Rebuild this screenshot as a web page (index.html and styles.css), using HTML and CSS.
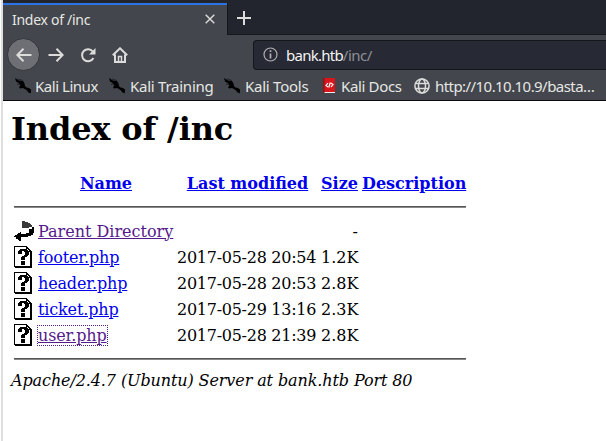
FILE: index.html
```
<!DOCTYPE html>
<html lang="en">
<head>
<meta charset="utf-8">
<title>Index of /inc</title>
<link rel="stylesheet" href="styles.css">
</head>
<body>
<svg class="defs" width="0" height="0">
  <symbol id="dragon" viewBox="0 0 16 16"><path d="M0 0l4 2.500 4 .5 1.500 2.500.5 2.500 1.500 1.500 2.500.5 2.500 2-.8 3.200-2.200-.7-2-2.500-3.500-2-3 .5-1-1.500 1.500-1.500L3.500 5 1 3.500z" fill="#000"/><path d="M3 1l5 1.500M2 6.500L5 6" stroke="#15171b" stroke-width=".7"/></symbol>
  <symbol id="unknown" viewBox="0 0 20 22" shape-rendering="crispEdges"><path d="M.5 .5h12l4 4v16h-16z" fill="#fff" stroke="#000"/><path d="M17 5h1v17H1v-1h16z" fill="#000"/><path d="M12 1h1v1h1v1h1v1h1v1h1v1h-5z" fill="#000"/><path d="M13 3h1v1h1v1h-2z" fill="#fff"/><path d="M4 8V5h1V4h1V3h6v1h2v1h1v4h-1v1h-1v1h-2v3H7v-3h1v-1h2V9h1V6h-1V5H8v3zM7 15h4v4H7z" fill="#000"/></symbol>
</svg>
<div class="window">
  <header class="chrome">
    <div class="tabs">
      <div class="tab"><span>Index of /inc</span>
        <svg width="10" height="10" viewBox="0 0 10 10"><path d="M.7 .7l8.600 8.600M9.300 .7L.7 9.300" stroke="#d8d8d6" stroke-width="1.500"/></svg>
      </div>
      <div class="newtab"><svg width="14" height="14" viewBox="0 0 14 14"><path d="M7 0v14M0 7h14" stroke="#dcdcda" stroke-width="2"/></svg></div>
    </div>
    <div class="nav">
      <div class="back"><svg width="16" height="16" viewBox="0 0 16 16"><path d="M15.500 8H1.500M7.500 1.800L1.300 8l6.200 6.200" class="line"/></svg></div>
      <svg class="forward" width="16" height="16" viewBox="0 0 16 16"><path d="M.5 8h14M8.500 1.800L14.700 8l-6.200 6.200" class="line"/></svg>
      <svg class="reload" width="16" height="16" viewBox="0 0 16 16"><path d="M12.800 4.500A6 6 0 1 0 13.400 11" class="line"/><path d="M15.500 1v6.500H9z" fill="#dcdcda"/></svg>
      <svg class="home" width="16" height="16" viewBox="0 0 16 16"><path d="M.8 8.200L8 1.300l7.200 6.900M3 7.500V15h10V7.500" class="line"/><path d="M6.500 15V9.500h3V15" fill="none" stroke="#dcdcda" stroke-width="1.500"/></svg>
      <div class="url"><svg width="15" height="15" viewBox="0 0 15 15"><circle cx="7.500" cy="7.500" r="6.500" fill="none" stroke="#b0b0b3" stroke-width="1.200"/><path d="M7.500 6.500v5M7.500 3.300v1.800" stroke="#b0b0b3" stroke-width="1.700"/></svg><span class="address">bank.htb<span class="path">/inc/</span></span></div>
    </div>
    <div class="bookmarks">
      <div class="mark linux"><svg width="16" height="16"><use href="#dragon"/></svg><span>Kali Linux</span></div>
      <div class="mark training"><svg width="16" height="16"><use href="#dragon"/></svg><span>Kali Training</span></div>
      <div class="mark tools"><svg width="16" height="16"><use href="#dragon"/></svg><span>Kali Tools</span></div>
      <div class="mark docs"><svg width="16" height="16" viewBox="0 0 16 16"><path d="M2 0h12v14H2z" fill="#d9161c"/><path d="M2 14h12v1H2z" fill="#eee"/><path d="M2 0h1.500v15H2z" fill="#8f1518"/><path d="M7 5L5 7.500l2 1.500M10 5l2 1.500L10 9M9.300 4.500l-1.500 5" stroke="#fff" stroke-width="1.200" fill="none"/></svg><span>Kali Docs</span></div>
      <div class="mark site"><svg width="16" height="16" viewBox="0 0 16 16"><g fill="none" stroke="#dcdcda" stroke-width="1.500"><circle cx="8" cy="8" r="7.100"/><ellipse cx="8" cy="8" rx="3.500" ry="7"/><path d="M1.500 5.500h13M1.500 10.500h13"/></g></svg><span>http://10.10.10.9/basta…</span></div>
    </div>
  </header>
  <main class="page">
    <h1>Index of /inc</h1>
    <table>
      <colgroup><col class="c-icon"><col class="c-name"><col class="c-date"><col class="c-size"><col class="c-desc"></colgroup>
      <tr class="row"><th></th><th><a href="#">Name</a></th><th><a href="#">Last modified</a></th><th><a href="#">Size</a></th><th><a href="#">Description</a></th></tr>
      <tr><td colspan="5"><hr></td></tr>
      <tr class="row"><td><svg class="icon" width="20" height="22" viewBox="0 0 20 22" shape-rendering="crispEdges"><path d="M8 1h3v1h3v1h2v1h1v1h1v2h-3v1H8z" fill="#3a3a3a"/><path d="M18 7h2v6h-1v2h-2v1h-3v1H7v4H5v-1H4v-1H2v-2H0v-1h1v-1h2v-1h1v-1h2v-1h1v2h5v-1h3V9h3z" fill="#000"/></svg></td><td><a class="visited" href="#">Parent Directory</a></td><td></td><td class="num">-</td><td></td></tr>
      <tr class="row"><td><svg class="icon" width="20" height="22"><use href="#unknown"/></svg></td><td><a class="file" href="#">footer.php</a></td><td class="date">2017-05-28 20:54</td><td class="num">1.2K</td><td></td></tr>
      <tr class="row"><td><svg class="icon" width="20" height="22"><use href="#unknown"/></svg></td><td><a class="file" href="#">header.php</a></td><td class="date">2017-05-28 20:53</td><td class="num">2.8K</td><td></td></tr>
      <tr class="row"><td><svg class="icon" width="20" height="22"><use href="#unknown"/></svg></td><td><a class="file" href="#">ticket.php</a></td><td class="date">2017-05-29 13:16</td><td class="num">2.3K</td><td></td></tr>
      <tr class="row"><td><svg class="icon" width="20" height="22"><use href="#unknown"/></svg></td><td><a class="file visited focused" href="#">user.php</a></td><td class="date">2017-05-28 21:39</td><td class="num">2.8K</td><td></td></tr>
      <tr><td colspan="5"><hr></td></tr>
    </table>
    <address>Apache/2.4.7 (Ubuntu) Server at bank.htb Port 80</address>
  </main>
</div>
</body>
</html>
```
FILE: styles.css
```
* { box-sizing: border-box; }
html, body { margin: 0; height: 441px; overflow: hidden; background: #fff; }
body { padding-left: 1px; }
.defs { display: block; height: 0; }
.window { height: 441px; border-left: 2px solid #dfdfdf; }
.chrome { height: 101px; background: #43464d; border-bottom: 1px solid #08090d; font-family: "Noto Sans", sans-serif; color: #e6e6e3; white-space: nowrap; }
.tabs { display: flex; height: 35px; background: #22242e; padding-top: 3px; border-bottom: 1px solid #15171d; }
.tab { width: 224px; height: 32px; background: #43464d; border-top: 2px solid #2c73e5; display: flex; align-items: center; justify-content: space-between; padding: 0 12px 2px 9px; font-size: 14px; letter-spacing: -.28px; }
.newtab { border-left: 1px solid #15171d; padding: 5px 0 0 9px; }
.nav { display: flex; height: 37px; margin-top: 1px; align-items: center; }
.line { fill: none; stroke: #dcdcda; stroke-width: 2; }
.back { width: 33px; height: 33px; margin-left: 4px; border-radius: 50%; border: 1px solid #323439; background: #6d6f75; display: flex; align-items: center; justify-content: center; flex: none; }
.forward { margin-left: 8px; }
.reload { margin-left: 16px; }
.home { margin-left: 16px; }
.url { margin-left: 125px; flex: 1; height: 30px; border: 1px solid #14161b; border-right: 0; border-radius: 4px 0 0 4px; background: #272934; display: flex; align-items: center; gap: 8px; padding-left: 9px; font-size: 15px; color: #f3f3f1; }
.address { letter-spacing: -.75px; padding-top: 1px; }
.path { color: #8e8f95; letter-spacing: -.5px; }
.bookmarks { display: flex; height: 26px; padding-bottom: 1px; font-size: 15px; padding-left: 12px; }
.mark { display: flex; align-items: center; gap: 4px; flex: none; letter-spacing: -.47px; }
.linux { width: 94px; }
.training { width: 115px; letter-spacing: -.25px; gap: 5px; }
.tools { width: 97px; letter-spacing: -.25px; gap: 5px; }
.docs { width: 93px; letter-spacing: -.35px; }
.site { letter-spacing: -.56px; gap: 5px; }
.page { padding-left: 8px; font: 16px/19px "DejaVu Serif", serif; color: #000; }
h1 { margin: 0; padding-top: 9px; height: 68px; font-size: 32px; line-height: 38px; letter-spacing: -.15px; }
table { table-layout: fixed; width: 458px; border-spacing: 2px; }
td, th { padding: 1px; white-space: nowrap; }
th:nth-child(2), th:nth-child(3) { padding-left: 2px; }
td { text-align: left; }
.row { height: 24px; }
.c-icon { width: 22px; }
.c-name { width: 137px; }
.c-date { width: 142px; }
.c-size { width: 39px; }
.c-desc { width: 106px; }
.num { text-align: right; }
.date { letter-spacing: -.27px; }
.file { letter-spacing: -.15px; }
.icon { display: block; }
hr { margin: 8px 0; height: 2px; border: 0; border-top: 1px solid #555; background: #888; }
a { color: #0000ee; text-decoration: underline; }
.visited { color: #551a8b; }
.focused { outline: 1px dotted #551a8b; }
address { font-style: italic; letter-spacing: -.105px; }
```
